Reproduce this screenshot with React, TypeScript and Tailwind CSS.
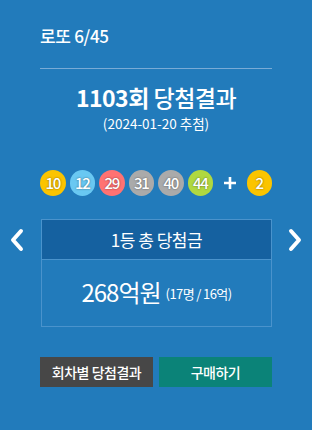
import React from "react";

const F = { fontFamily: '"Noto Sans CJK KR", "Noto Sans", sans-serif' };

function Ball({ n, c }: { n: number; c: string }) {
  return (
    <div
      className={`w-[26px] h-[26px] rounded-full flex items-center justify-center text-white text-[15px] font-medium tracking-[-1.2px] ${c}`}
      style={{ textShadow: "0 0 2px rgba(0,0,0,0.55)" }}
    >
      {n}
    </div>
  );
}

export default function App() {
  return (
    <div className="w-[312px] h-[430px] bg-[#227bbb] text-white" style={F}>
      <div className="px-10 pt-[24px]">
        <div className="text-[17px] leading-6 font-medium tracking-[-0.3px] h-6">로또 6/45</div>
        <div className="mt-[20px] h-px bg-[#79abd6]" />
        <div className="mt-[14px] text-center text-[23px] leading-7 tracking-[-0.5px] h-7">
          <span className="font-bold">1103회</span> <span className="font-medium">당첨결과</span>
        </div>
        <div className="text-center text-[13.5px] leading-4 mt-[4px] h-4">(2024-01-20 추첨)</div>
        <div className="mt-[39px] flex items-center gap-1">
          <Ball n={10} c="bg-[#fbc400]" />
          <Ball n={12} c="bg-[#69c8f2]" />
          <Ball n={29} c="bg-[#ff7272]" />
          <Ball n={31} c="bg-[#aaaaaa]" />
          <Ball n={40} c="bg-[#aaaaaa]" />
          <Ball n={44} c="bg-[#b0d840]" />
          <div className="w-[26px] flex justify-center">
            <svg width="14" height="14" viewBox="0 0 14 14">
              <path d="M7 1v12M1 7h12" stroke="white" strokeWidth="2.6" />
            </svg>
          </div>
          <Ball n={2} c="bg-[#fbc400]" />
        </div>
      </div>
      <div className="mt-[23px] flex items-start">
        <div className="w-[41px] flex justify-center pt-[9px]">
          <svg width="16" height="24" viewBox="0 0 16 24" className="ml-[-7px]">
            <path d="M12 3L4 12l8 9" stroke="white" strokeWidth="4" fill="none" strokeLinecap="round" strokeLinejoin="round" />
          </svg>
        </div>
        <div className="w-[231px] border border-[#4a93cc]">
          <div className="h-[40px] bg-[#1561a0] border-b border-[#4a93cc] flex items-center justify-center text-[17px] tracking-[-0.5px]">
            1등 총 당첨금
          </div>
          <div className="h-[66px] flex items-center justify-center pb-[2px]">
            <span className="text-[24px] tracking-[-1px]">268억원</span>
            <span className="ml-[5px] text-[13px] tracking-[-0.6px] mt-[4px] whitespace-pre">(17명 / 16억)</span>
          </div>
        </div>
        <div className="w-[40px] flex justify-center pt-[9px]">
          <svg width="16" height="24" viewBox="0 0 16 24" className="ml-[6px]">
            <path d="M4 3l8 9-8 9" stroke="white" strokeWidth="4" fill="none" strokeLinecap="round" strokeLinejoin="round" />
          </svg>
        </div>
      </div>
      <div className="px-10 mt-[30px] flex gap-[6px]">
        <div className="w-[113px] h-[30px] bg-[#474747] flex items-center justify-center text-[14px] font-medium tracking-[-0.5px]">
          회차별 당첨결과
        </div>
        <div className="w-[113px] h-[30px] bg-[#0b8378] flex items-center justify-center text-[14px] font-medium tracking-[-0.5px]">
          구매하기
        </div>
      </div>
    </div>
  );
}
